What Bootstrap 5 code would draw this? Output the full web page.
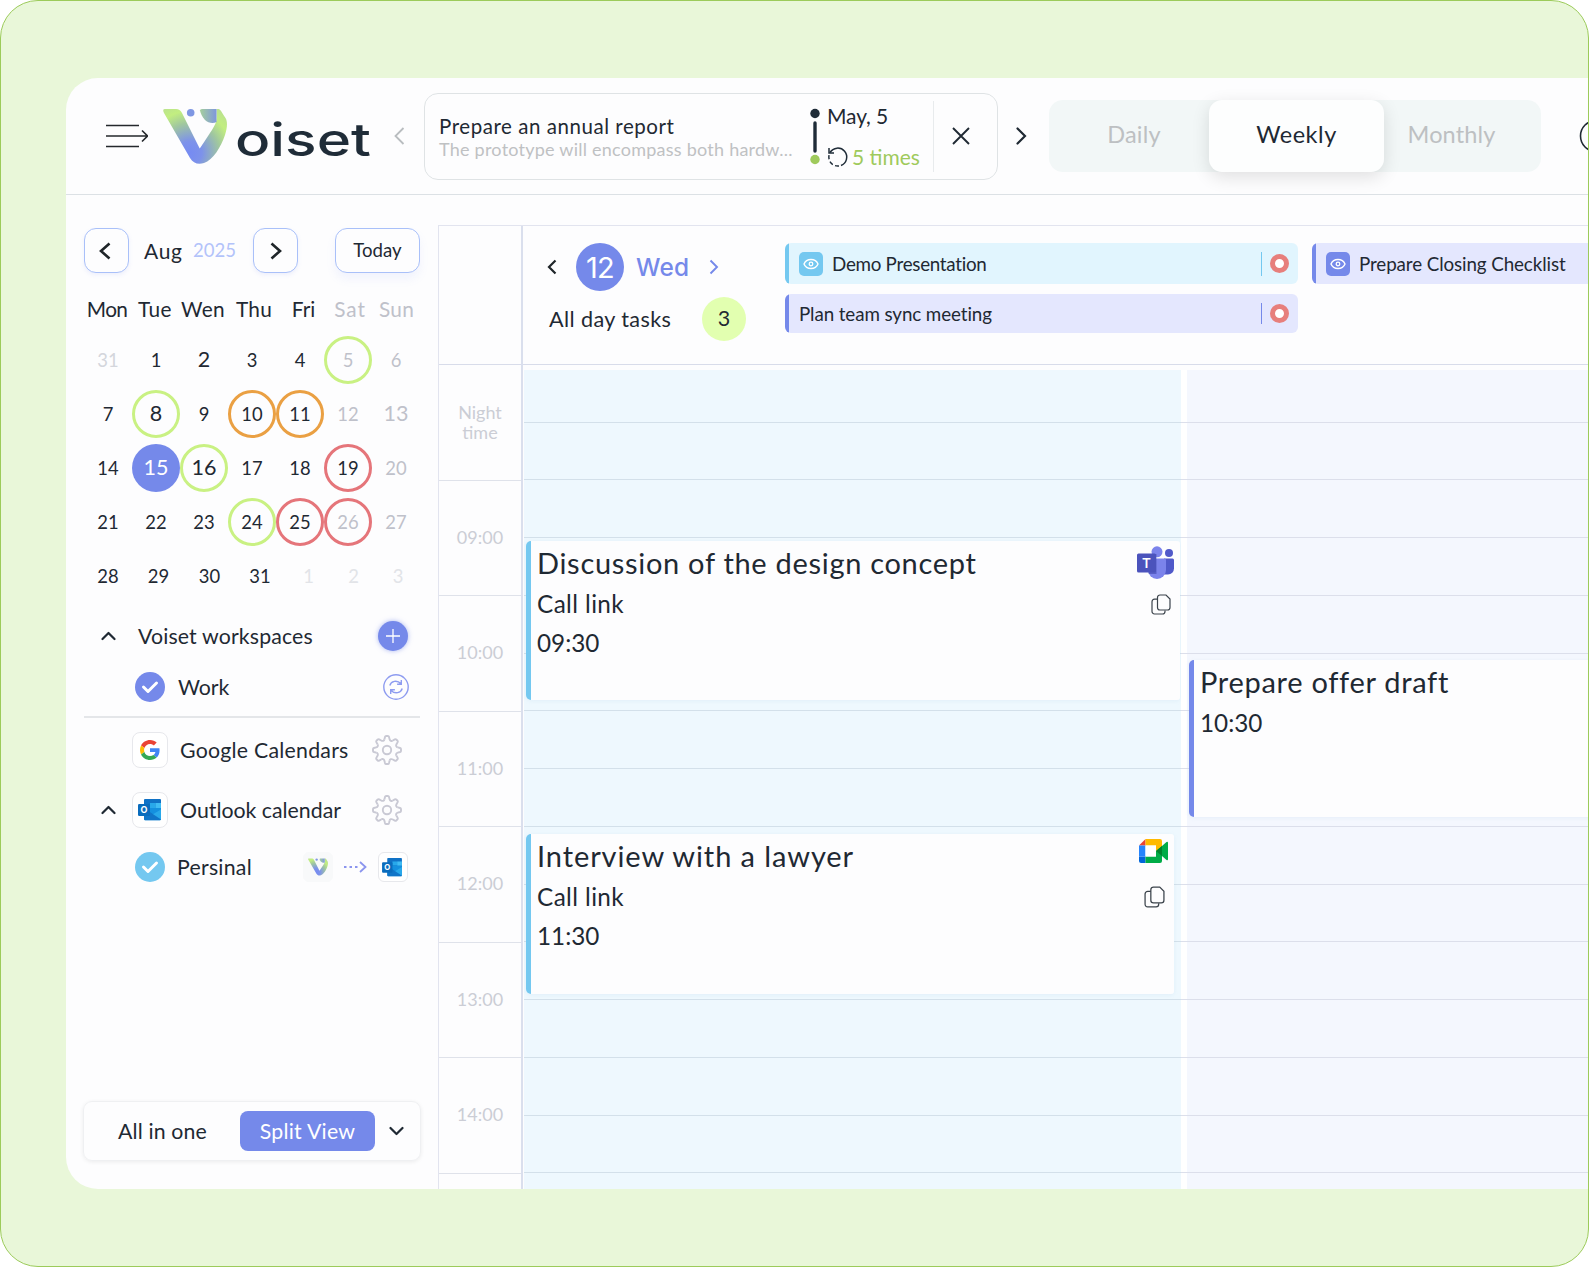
<!DOCTYPE html>
<html lang="en">
<head>
<meta charset="utf-8">
<meta name="viewport" content="width=device-width, initial-scale=1">
<title>Voiset</title>
<link href="https://cdn.jsdelivr.net/npm/bootstrap@5.3.0/dist/css/bootstrap.min.css" rel="stylesheet">
<style>
:root{--ink:#1f2933;--blue:#7589ea;--sky:#74c8f0;--line:#dfe3ea}
body{font-family:Lato,"Open Sans",sans-serif;color:var(--ink);background:#fff;overflow:hidden;line-height:1.2}
svg{display:block;flex:none}
.stage{width:1589px;height:1267px;border:1px solid #9ccb5a;border-radius:38px;background:#e9f7d9;padding:77px 0 0 65px;overflow:hidden}
.panel{height:1111px;background:#fdfdfe;border-radius:32px 0 0 32px;overflow:hidden}
.t{white-space:nowrap;flex:none}
/* tracking steps */
.s1{letter-spacing:.14px}.s2{letter-spacing:.24px}.s3{letter-spacing:.4px}.s5{letter-spacing:.55px}.s7{letter-spacing:.7px}.s9{letter-spacing:.91px}
.n1{letter-spacing:-.1px}.n2{letter-spacing:-.27px}.n8{letter-spacing:-.7px}
/* top bar */
.topbar{height:117px;border-bottom:1px solid #dce1e5;padding-left:40px}
.logo-mark{margin-left:15px}
.logo-word{margin-left:8px}
.task{width:574px;height:87px;border:1px solid #dfe3e5;border-radius:14px;margin-left:19px;flex:none}
.task-text{width:366px;padding-left:14px;flex:none}
.task-title{font-size:20.5px;line-height:24px;margin-top:3px}
.task-sub{font-size:18px;line-height:23px;color:#bfc1c3}
.task-date{font-size:21px;line-height:41px;margin-left:7px}
.task-sep{width:1px;height:71px;background:#e8ebed;margin-left:13px}
.seg{width:492px;height:72px;background:#f2f7f7;border-radius:14px;margin-left:22px;font-size:23.5px;color:#bdc0c2;flex:none}
.seg>div{padding-bottom:3px}
.seg-on{width:175px;height:72px;background:#fdfefe;border-radius:13px;color:var(--ink);box-shadow:0 5px 18px rgba(0,0,0,.12);flex:none}
.seg-l{width:160px;padding-left:10px}
.seg-r{width:157px;padding-right:22px}
/* sidebar */
.side{width:372px;padding:33px 0 0 18px}
.side-in{width:336px}
.sq{height:45px;width:45px;border:1.5px solid #a9c0f9;border-radius:12px;background:#fdfdfe;box-shadow:0 2px 4px rgba(120,140,240,.12)}
.sq-today{width:85px;font-size:18.6px;box-shadow:0 6px 10px rgba(120,140,240,.09)}
.month{font-size:21px}
.year{font-size:18.5px;color:#b3c3fa}
.cell,.wd{flex:none;display:flex;align-items:center;justify-content:center}
.wdays{margin-top:13px;height:47px;font-size:20.8px}
.wk{height:54px;font-size:18.4px}
.cell{width:48px;height:48px;border-radius:50%}
.big{font-size:21.5px}
.off{color:#bfc1ca}.off2{color:#e2e4e8}
.g{border:3px solid #c9f183}.o{border:3px solid #eaa043}.r{border:3px solid #e5757a}
.sel{background:var(--blue);color:#fff}
.item{font-size:21.3px}
.item .t{padding-top:2px}
.h66{height:66px}.h36{height:36px}.h64{height:64px}.h56{height:56px}.h58{height:58px}
.dot30{width:30px;height:30px;border-radius:50%;flex:none;display:flex;align-items:center;justify-content:center}
.bg-blue{background:var(--blue)}.bg-sky{background:var(--sky)}
.rule{height:2px;background:#e4e6e9;margin-top:11px}
.tile{width:36px;height:36px;border:1px solid #e7e8ec;border-radius:8px;background:#fff;flex:none;display:flex;align-items:center;justify-content:center}
.tile-s{width:30px;height:30px;border-radius:6px}
.views{width:338px;height:60px;margin:205px 0 0 -1px;border:1.5px solid #eff0f2;border-radius:9px;box-shadow:0 1px 4px rgba(0,0,0,.07);font-size:21.3px}
.views .t{padding-top:2px}
.split{width:135px;height:40px;border-radius:8px;background:var(--blue);color:#fff}
/* schedule */
.sched{margin-top:30px;border:1px solid #e2e4ef;border-width:1px 0 0 1px;height:964px}
.times{width:84px;border-right:2px solid #dadfed;color:#cbcdd5;font-size:18px}
.corner,.dayhead{height:139px;border-bottom:1px solid #d8dcea}
.night{height:115.5px;border-bottom:1px solid #dfe2ea;line-height:20.4px}
.hour{height:115.5px;border-bottom:1px solid #dfe2ea}
.dayhead{padding:17px 0 0 24px}
.dnum{width:48px;height:48px;border-radius:50%;background:var(--blue);color:#fff;font:400 29px Inter,sans-serif}
.dname{font:500 24.4px Inter,sans-serif;color:var(--blue)}
.alltxt{font-size:21.6px}
.cnt{width:44px;height:44px;border-radius:50%;background:#e2ffb0;font-size:21.5px}
.chip{width:513px;height:41px;border-radius:6px;font-size:18.8px;padding-left:14px;flex:none}
.chip-sky{background:linear-gradient(90deg,var(--sky) 4.5px,#e1f5fe 4.5px)}
.chip-vio{background:linear-gradient(90deg,var(--blue) 4.5px,#e4e7fe 4.5px)}
.chip .t{padding-top:1px}
.eye{width:24px;height:24px;border-radius:5px}
.bar2{width:1.5px;height:24px}
.ring{width:19px;height:19px;border-radius:50%;border:5px solid #e77f7c;background:#fff;margin:0 9px 0 8px;flex:none}
.daycol{margin-top:5px;position:relative;height:820px}
.slot{height:57.75px;border-bottom:1px solid #d3e0ea}
.slot:first-child{height:52.5px}
.c1{width:657px;margin-left:1px;background:#eef8fe}
.gapcol{width:6px;background:#fff}
.c2{background:#f4f7fe}
.c2 .slot,.gapcol .slot{border-color:#dcdfeb}
.ev{position:absolute;border-radius:5px 3px 3px 5px;padding:10px 0 0 11px;box-shadow:0 1px 4px rgba(150,190,220,.14)}
.ev-sky{background:linear-gradient(90deg,var(--sky) 5px,#fdfdfe 5px)}
.ev-vio{background:linear-gradient(90deg,var(--blue) 5px,#fdfdfe 5px)}
.ev1{left:2px;top:171px;width:654px;height:159px}
.ev2{left:2px;top:464px;width:648px;height:160px}
.ev3{left:2px;top:290px;width:420px;height:157px}
.ev-t{font-size:29px;line-height:24px}
.ev-s{font-size:24.3px;line-height:39px}
.ev-s1{margin-top:8.5px}
</style>
<script src="https://cdn.jsdelivr.net/npm/bootstrap@5.3.0/dist/js/bootstrap.bundle.min.js"></script>
</head>
<body>
<svg width="0" height="0" class="position-absolute">
  <defs>
    <radialGradient id="vg" gradientUnits="userSpaceOnUse" cx="27" cy="44" r="54"><stop offset="0" stop-color="#768bf2"/><stop offset=".22" stop-color="#7d92ea"/><stop offset=".55" stop-color="#a0c79f"/><stop offset=".78" stop-color="#c2ee80"/><stop offset="1" stop-color="#b9e092"/></radialGradient>
    <linearGradient id="vl" x1="0" y1="0" x2="1" y2="0"><stop offset="0" stop-color="#a5cf9c"/><stop offset="1" stop-color="#7f97dd"/></linearGradient>
    <symbol id="vmark" viewBox="0 0 64 55"><path fill="url(#vg)" d="M2 0H13Q17 0 19 4L36.700 39.500C40 35 45 27 49 21C52 16 53.500 13 53.500 9V0H56C59 2 60 6 62.500 9C65 13 64 20 62 26C58 38 50 51 41 54C35 56 30 54 27 49L1 4Q-1 0 2 0Z"/><path fill="url(#vl)" d="M39 0H53.500V13C50 15 45 14 42 11C39 8 37.500 4 37 1.500Q37 0 39 0Z"/><circle cx="27.700" cy="3.800" r="3.800" fill="#7f97e3"/></symbol>
    <symbol id="outlook" viewBox="0 0 23 22"><rect x="6" width="17" height="13" rx="1" fill="#1072c6"/><path fill="#28a8ea" d="M12 4h5.500v5H12z"/><path fill="#3fbcf4" d="M17.500 4H23v5h-5.500z"/><path fill="#0364b8" d="M12 9h5.500v4H12z"/><path fill="#1490df" d="M6 9h17v11a1.200 1.200 0 0 1-1.200 1.200H7.200A1.200 1.200 0 0 1 6 20z"/><path fill="#28a8ea" d="M23 10.500v10l-8.500-5z"/><path fill="#0f6cc0" d="M6 9l17 11.500a1 1 0 0 1-1 .7H7.200A1.200 1.200 0 0 1 6 20z" opacity=".75"/><rect y="5" width="12" height="12" rx="1.200" fill="#0a6cbd"/><text x="6" y="14.200" font-family="Inter,sans-serif" font-size="9" font-weight="700" text-anchor="middle" fill="#fff">O</text></symbol>
    <path id="tooth" d="M-2.600 -10.800L-2 -13.100Q-1.700 -14 -.9 -14H.9Q1.700 -14 2 -13.100L2.600 -10.800C3 -9.200 4.500 -8.600 5.800 -9.470"/>
    <symbol id="gear" viewBox="-15 -15 30 30"><g fill="none" stroke="#c9c9d4" stroke-width="1.900"><use href="#tooth"/><use href="#tooth" transform="rotate(45)"/><use href="#tooth" transform="rotate(90)"/><use href="#tooth" transform="rotate(135)"/><use href="#tooth" transform="rotate(180)"/><use href="#tooth" transform="rotate(225)"/><use href="#tooth" transform="rotate(270)"/><use href="#tooth" transform="rotate(315)"/><circle r="4.200"/></g></symbol>
    <symbol id="check" viewBox="0 0 18 14"><path d="M2.500 7l4.500 4.500 8.500-8.500" fill="none" stroke="#fff" stroke-width="3" stroke-linecap="round" stroke-linejoin="round"/></symbol>
    <symbol id="eyei" viewBox="0 0 16 12"><path d="M1 6C3.500 0 12.500 0 15 6 12.500 12 3.500 12 1 6Z" fill="none" stroke="#fff" stroke-width="1.400"/><circle cx="8" cy="6" r="1.800" fill="none" stroke="#fff" stroke-width="1.300"/></symbol>
    <symbol id="copy" viewBox="0 0 20 21"><g fill="none" stroke="#3b434b" stroke-width="1.200"><path d="M6.500 5.200H3.500a2.500 2.500 0 0 0-2.500 2.500v9.600A2.500 2.500 0 0 0 3.500 20h8a2.500 2.500 0 0 0 2.500-2.500v-1"/><path d="M9 1h6l4 4v8.500a2.500 2.500 0 0 1-2.500 2.500H9a2.500 2.500 0 0 1-2.500-2.500v-10A2.500 2.500 0 0 1 9 1z"/></g></symbol>
    <symbol id="up" viewBox="0 0 15 10"><path d="M1.500 8L7.500 2l6 6" fill="none" stroke="#1f2933" stroke-width="2.200" stroke-linecap="round" stroke-linejoin="round"/></symbol>
  </defs>
</svg>

<div class="stage">
 <div class="panel d-flex flex-column">
  <header class="topbar d-flex align-items-center flex-nowrap">
    <svg width="42" height="24" viewBox="0 0 42 24" fill="none" stroke="#24282c" stroke-width="1.600"><path d="M0 1.500h33M0 22.500h33M0 12h41M36 6.500l5.500 5.500-5.500 5.500"/></svg>
    <svg class="logo-mark" width="64" height="55"><use href="#vmark"/></svg>
    <svg class="logo-word" width="140" height="70" viewBox="0 0 140 70"><text x="0" y="54.500" font-family="Inter,sans-serif" font-weight="500" font-size="45" fill="#1f2c38" textLength="136" lengthAdjust="spacingAndGlyphs">oiset</text></svg>
    <svg width="11" height="18" viewBox="0 0 11 18" style="margin-left:19px" fill="none" stroke="#b9bdc0" stroke-width="1.800"><path d="M9.500 1L1.500 9l8 8"/></svg>
    <div class="task d-flex align-items-center">
      <div class="task-text"><div class="t task-title s5">Prepare an annual report</div><div class="t task-sub s2">The prototype will encompass both hardw...</div></div>
      <svg style="margin-left:19px" width="10" height="57" viewBox="0 0 10 57"><circle cx="5" cy="5.500" r="4.700" fill="#1f2c38"/><path d="M5 15v28" stroke="#1f2c38" stroke-width="3.400" stroke-linecap="round"/><circle cx="5" cy="51.500" r="4.700" fill="#9fca5c"/></svg>
      <div class="task-date"><div class="t n1">May, 5</div>
        <div class="d-flex align-items-center"><svg width="22" height="22" viewBox="0 0 22 22" fill="none" stroke="#1f2c38" stroke-width="1.500"><path d="M3 6.500A9 9 0 1 1 14 19.500"/><path d="M12 20a9 9 0 0 1-9.800-11.500" stroke-dasharray="4 2.500"/><path d="M2 2v5h5"/></svg><span class="t" style="margin-left:3px;color:#9fca5c">5 times</span></div></div>
      <div class="task-sep"></div>
      <svg style="margin-left:18px" width="18" height="18" viewBox="0 0 18 18"><path d="M1 1l16 16M17 1L1 17" stroke="#1f2933" stroke-width="1.900"/></svg>
    </div>
    <svg width="11" height="18" viewBox="0 0 11 18" style="margin-left:18px" fill="none" stroke="#1f2933" stroke-width="2.200" stroke-linecap="round"><path d="M1.500 1.500L9 9l-7.500 7.500"/></svg>
    <div class="seg d-flex">
      <div class="seg-l d-flex align-items-center justify-content-center"><span class="t s2">Daily</span></div>
      <div class="seg-on d-flex align-items-center justify-content-center"><span class="t s5">Weekly</span></div>
      <div class="seg-r d-flex align-items-center justify-content-center"><span class="t s1">Monthly</span></div>
    </div>
    <svg width="34" height="34" viewBox="0 0 34 34" style="margin-left:38px"><circle cx="17" cy="17" r="15.500" fill="none" stroke="#1f2933" stroke-width="1.600"/></svg>
  </header>

  <div class="d-flex flex-grow-1">
   <aside class="side flex-shrink-0">
    <div class="side-in">
     <div class="d-flex align-items-center">
      <div class="sq d-flex align-items-center justify-content-center pe-1"><svg width="12" height="18" viewBox="0 0 12 18"><path d="M10.500 1.500L2 9l8.500 7.500" fill="none" stroke="#1f2529" stroke-width="2.600"/></svg></div>
      <div class="t month s7" style="width:49px;margin-left:15px">Aug</div>
      <div class="t year" style="width:60px">2025</div>
      <div class="sq d-flex align-items-center justify-content-center"><svg width="12" height="18" viewBox="0 0 12 18"><path d="M1.500 1.500L10 9l-8.500 7.500" fill="none" stroke="#1f2529" stroke-width="2.600"/></svg></div>
      <div class="sq sq-today ms-auto d-flex align-items-center justify-content-center"><span class="t">Today</span></div>
     </div>
     <div class="wdays d-flex">
      <div class="wd n8" style="width:46px">Mon</div><div class="wd s3" style="width:50px">Tue</div><div class="wd s3" style="width:46px">Wen</div><div class="wd s2" style="width:56px">Thu</div><div class="wd" style="width:43px">Fri</div><div class="wd off s9" style="width:50px">Sat</div><div class="wd off s2" style="width:43px">Sun</div>
     </div>
     <div class="wk d-flex align-items-center"><div class="cell off2" style="color:#d4d6dc">31</div><div class="cell">1</div><div class="cell big">2</div><div class="cell">3</div><div class="cell">4</div><div class="cell g off">5</div><div class="cell off">6</div></div>
     <div class="wk d-flex align-items-center"><div class="cell">7</div><div class="cell g big">8</div><div class="cell">9</div><div class="cell o">10</div><div class="cell o">11</div><div class="cell off">12</div><div class="cell off big">13</div></div>
     <div class="wk d-flex align-items-center"><div class="cell">14</div><div class="cell sel big">15</div><div class="cell g big">16</div><div class="cell">17</div><div class="cell">18</div><div class="cell r">19</div><div class="cell off">20</div></div>
     <div class="wk d-flex align-items-center"><div class="cell">21</div><div class="cell">22</div><div class="cell">23</div><div class="cell g">24</div><div class="cell r">25</div><div class="cell r off">26</div><div class="cell off">27</div></div>
     <div class="wk d-flex align-items-center"><div class="wd" style="width:48px">28</div><div class="wd" style="width:53px">29</div><div class="wd" style="width:49px">30</div><div class="wd" style="width:52px">31</div><div class="wd off2" style="width:45px">1</div><div class="wd off2" style="width:45px">2</div><div class="wd off2" style="width:44px">3</div></div>

     <div class="item h66 d-flex align-items-center"><svg style="margin-left:17px" width="15" height="10"><use href="#up"/></svg><span class="t s1" style="margin-left:22px">Voiset workspaces</span>
       <div class="dot30 bg-blue ms-auto" style="margin-right:12px;box-shadow:0 0 5px rgba(117,137,234,.6)"><svg width="14" height="14"><path d="M7 0v14M0 7h14" stroke="#fff" stroke-width="1.300"/></svg></div></div>
     <div class="item h36 d-flex align-items-center"><div class="dot30 bg-blue" style="margin-left:51px"><svg width="18" height="14"><use href="#check"/></svg></div><span class="t n1" style="margin-left:13px">Work</span>
       <svg class="ms-auto" style="margin-right:11px" width="26" height="26" viewBox="0 0 26 26" fill="none" stroke="#8e9cf0" stroke-width="1.400"><circle cx="13" cy="13" r="12.200"/><path d="M6.800 11.500C8 7 14 5.500 17.800 9.600M18.300 6v4.200h-4.200M19.200 14.500C18 19 12 20.500 8.200 16.400M7.700 20v-4.200h4.200"/></svg></div>
     <div class="rule"></div>
     <div class="item h64 d-flex align-items-center"><div class="tile" style="margin-left:48px"><svg width="20" height="20" viewBox="0 0 48 48"><path fill="#ea4335" d="M24 9.500c3.540 0 6.710 1.220 9.210 3.600l6.850-6.850C35.900 2.380 30.470 0 24 0 14.620 0 6.510 5.380 2.560 13.220l7.980 6.190C12.430 13.720 17.740 9.500 24 9.500z"/><path fill="#4285f4" d="M46.980 24.550c0-1.570-.15-3.090-.38-4.550H24v9.020h12.940c-.58 2.960-2.260 5.480-4.780 7.180l7.730 6c4.510-4.180 7.090-10.360 7.090-17.650z"/><path fill="#fbbc05" d="M10.530 28.590c-.48-1.450-.76-2.990-.76-4.590s.27-3.140.76-4.590l-7.980-6.190C.92 16.460 0 20.120 0 24c0 3.880.92 7.540 2.560 10.780l7.970-6.190z"/><path fill="#34a853" d="M24 48c6.480 0 11.930-2.130 15.890-5.810l-7.730-6c-2.150 1.450-4.920 2.300-8.160 2.300-6.260 0-11.570-4.220-13.470-9.910l-7.980 6.190C6.510 42.620 14.620 48 24 48z"/></svg></div><span class="t s2" style="margin-left:12px">Google Calendars</span><svg class="ms-auto" style="margin-right:18px" width="30" height="30"><use href="#gear"/></svg></div>
     <div class="item h56 d-flex align-items-center"><svg style="margin-left:17px" width="15" height="10"><use href="#up"/></svg><div class="tile" style="margin-left:16px"><svg width="23" height="22" style="margin-left:-2px"><use href="#outlook"/></svg></div><span class="t" style="margin-left:12px">Outlook calendar</span><svg class="ms-auto" style="margin-right:18px" width="30" height="30"><use href="#gear"/></svg></div>
     <div class="item h58 d-flex align-items-center"><div class="dot30 bg-sky" style="margin-left:51px"><svg width="18" height="14"><use href="#check"/></svg></div><span class="t s2" style="margin-left:12px">Persinal</span>
       <div class="tile tile-s ms-auto" style="border-color:#f8f9fa;background:#f8f9fa"><svg width="20" height="18"><use href="#vmark"/></svg></div>
       <svg style="margin:0 11px" width="23" height="12" viewBox="0 0 23 12" fill="none" stroke="#8b95ee" stroke-width="1.800"><path d="M0 6h16" stroke-dasharray="2.500 3"/><path d="M16 1l5.500 5-5.500 5"/></svg>
       <div class="tile tile-s" style="margin-right:12px"><svg width="20" height="19" style="margin-left:-2px"><use href="#outlook"/></svg></div></div>
     <div class="views d-flex align-items-center"><span class="t s1" style="width:122px;margin-left:34px">All in one</span><div class="split d-flex align-items-center justify-content-center"><span class="t s2">Split View</span></div><svg style="margin-left:14px;transform:rotate(180deg)" width="15" height="10"><use href="#up"/></svg></div>
    </div>
   </aside>

   <main class="sched d-flex flex-grow-1 overflow-hidden">
    <div class="times flex-shrink-0 text-center">
      <div class="corner"></div>
      <div class="night d-flex align-items-center justify-content-center"><span>Night<br>time</span></div>
      <div class="hour d-flex align-items-center justify-content-center">09:00</div>
      <div class="hour d-flex align-items-center justify-content-center">10:00</div>
      <div class="hour d-flex align-items-center justify-content-center">11:00</div>
      <div class="hour d-flex align-items-center justify-content-center">12:00</div>
      <div class="hour d-flex align-items-center justify-content-center">13:00</div>
      <div class="hour d-flex align-items-center justify-content-center">14:00</div>
    </div>
    <div class="flex-grow-1 overflow-hidden">
      <div class="dayhead d-flex align-items-start">
        <div style="width:238px" class="flex-shrink-0">
          <div class="d-flex align-items-center"><svg width="10" height="16" viewBox="0 0 10 16"><path d="M8.500 1.500L2 8l6.500 6.500" fill="none" stroke="#1f2529" stroke-width="2.200"/></svg>
            <div class="dnum n8 d-flex align-items-center justify-content-center" style="margin:0 12px 0 19px">12</div><span class="t dname s2">Wed</span><svg style="margin-left:20px" width="10" height="16" viewBox="0 0 10 16"><path d="M1.500 1.500L8 8l-6.500 6.500" fill="none" stroke="#7589ea" stroke-width="1.900"/></svg></div>
          <div class="d-flex align-items-center" style="margin-top:5.500px"><span class="t alltxt s3" style="width:155px;padding:2px 0 0 2px">All day tasks</span><div class="cnt d-flex align-items-center justify-content-center">3</div></div>
        </div>
        <div class="d-flex flex-column gap-2">
          <div class="d-flex">
            <div class="chip chip-sky d-flex align-items-center"><div class="eye bg-sky d-flex align-items-center justify-content-center"><svg width="16" height="12"><use href="#eyei"/></svg></div><span class="t n2" style="margin-left:9px">Demo Presentation</span><div class="bar2 bg-sky ms-auto"></div><div class="ring"></div></div>
            <div class="chip chip-vio d-flex align-items-center" style="margin-left:14px"><div class="eye bg-blue d-flex align-items-center justify-content-center"><svg width="16" height="12"><use href="#eyei"/></svg></div><span class="t n1" style="margin-left:9px">Prepare Closing Checklist</span></div>
          </div>
          <div class="chip chip-vio d-flex align-items-center" style="height:39px;margin-top:2px"><span class="t n1">Plan team sync meeting</span><div class="bar2 bg-blue ms-auto" style="height:21px"></div><div class="ring"></div></div>
        </div>
      </div>
      <div class="d-flex">
        <div class="daycol c1 flex-shrink-0">
          <div class="slot"></div><div class="slot"></div><div class="slot"></div><div class="slot"></div><div class="slot"></div><div class="slot"></div><div class="slot"></div><div class="slot"></div><div class="slot"></div><div class="slot"></div><div class="slot"></div><div class="slot"></div><div class="slot"></div><div class="slot"></div>
          <div class="ev ev-sky ev1 d-flex justify-content-between"><div><div class="t ev-t s7">Discussion of the design concept</div><div class="ev-s ev-s1 s3">Call link</div><div class="ev-s">09:30</div></div>
            <div style="margin:-5px 6px 0 0"><svg width="37" height="34" viewBox="0 0 37 34"><circle cx="32" cy="7" r="4" fill="#5059c9"/><path fill="#5059c9" d="M27 12.500h8.500A1.500 1.500 0 0 1 37 14v8.500a6 6 0 0 1-6 6h-4z"/><circle cx="20" cy="5.800" r="5.500" fill="#7b83eb"/><path fill="#7b83eb" d="M11 12.500h16.500A1.500 1.500 0 0 1 29 14v10a9 9 0 0 1-18 0z"/><path d="M11 8h8.500v20h-7.800z" fill="#3a41a8" opacity=".55"/><rect y="7.500" width="19" height="19" rx="1.500" fill="#4b53bc"/><text x="9.500" y="22" font-family="Inter,sans-serif" font-size="13.500" font-weight="600" text-anchor="middle" fill="#fff">T</text></svg>
            <svg style="margin:14px 0 0 14px" width="20" height="21"><use href="#copy"/></svg></div></div>
          <div class="ev ev-sky ev2 d-flex justify-content-between"><div><div class="t ev-t s9">Interview with a lawyer</div><div class="ev-s ev-s1 s3">Call link</div><div class="ev-s">11:30</div></div>
            <div style="margin:-5px 6px 0 0"><svg width="29" height="24" viewBox="0 0 29 24"><path fill="#ea4335" d="M0 6.500L6.500 0v6.500z"/><path fill="#ffba00" d="M6.500 0H21q2 0 2 2v7l-6 3V6.500H6.500z"/><path fill="#0066da" d="M0 17.500h6.500V24H2q-2 0-2-2z"/><path fill="#2684fc" d="M0 6.500h6.500v11H0z"/><path fill="#00ac47" d="M6.500 17.500H17V12l6-5v15q0 2-2 2H6.500z"/><path fill="#00832d" d="M17 12l6-5v10z"/><path fill="#00ac47" d="M23 7l4.500-4q1.500-.8 1.500 1v16q0 1.800-1.500 1L23 17z"/><path fill="#fff" d="M6.500 6.500H17v11H6.500z"/></svg>
            <svg style="margin:23px 0 0 5px" width="21" height="22"><use href="#copy"/></svg></div></div>
        </div>
        <div class="daycol gapcol flex-shrink-0"><div class="slot"></div><div class="slot"></div><div class="slot"></div><div class="slot"></div><div class="slot"></div><div class="slot"></div><div class="slot"></div><div class="slot"></div><div class="slot"></div><div class="slot"></div><div class="slot"></div><div class="slot"></div><div class="slot"></div><div class="slot"></div></div>
        <div class="daycol c2 flex-grow-1">
          <div class="slot"></div><div class="slot"></div><div class="slot"></div><div class="slot"></div><div class="slot"></div><div class="slot"></div><div class="slot"></div><div class="slot"></div><div class="slot"></div><div class="slot"></div><div class="slot"></div><div class="slot"></div><div class="slot"></div><div class="slot"></div>
          <div class="ev ev-vio ev3"><div class="t ev-t s7">Prepare offer draft</div><div class="ev-s ev-s1">10:30</div></div>
        </div>
      </div>
    </div>
   </main>
  </div>
 </div>
</div>
</body>
</html>
